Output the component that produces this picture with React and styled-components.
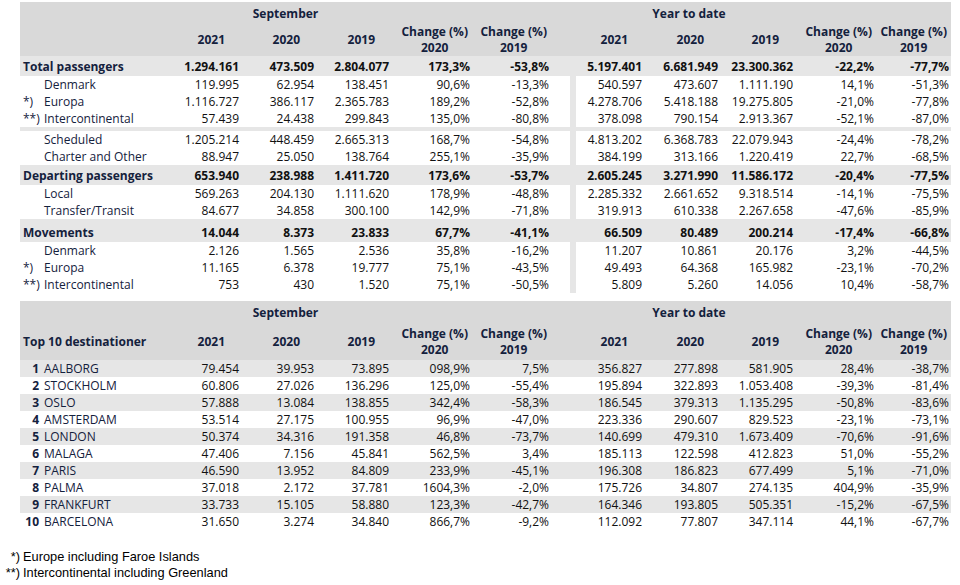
import React from "react";
import styled, { createGlobalStyle } from "styled-components";

const GlobalStyle = createGlobalStyle`
  body {
    margin: 0;
    background: #fff;
    font-family: "Open Sans", "Liberation Sans", sans-serif;
  }
`;

const COLS = "146px 75px 75px 75px 81px 98px 6px 68px 76px 75px 81px 75px";
const PADS = [2, 2, 2, 2, 21, 2, 2, 2, 2, 2];
const HEAD = "#d9d9d9";
const SHADE = "#e6e6e6";

const Page = styled.div`
  width: 960px;
  height: 585px;
  padding-top: 2px;
  box-sizing: border-box;
  overflow: hidden;
`;

const Table = styled.section`
  margin-left: 20px;
  width: 931px;
  margin-bottom: ${(p) => p.$gap || 0}px;
  font-size: 12px;
  color: #111;
`;

const Header = styled.div`
  background: ${HEAD};
  color: #14213d;
  font-weight: 700;
`;

const TitleRow = styled.div`
  display: grid;
  grid-template-columns: ${COLS};
  height: ${(p) => p.$h}px;
  align-items: center;
`;

const Title = styled.div`
  grid-column: ${(p) => p.$col};
  display: flex;
  justify-content: center;
  padding-left: 14px;
  white-space: nowrap;
`;

const HeadRow = styled.div`
  display: grid;
  grid-template-columns: ${COLS};
  height: ${(p) => p.$h}px;
  align-items: center;
`;

const HeadLabel = styled.div`
  padding-left: 3px;
  white-space: nowrap;
`;

const HeadCell = styled.div`
  display: flex;
  justify-content: flex-end;
  padding-right: ${(p) => p.$pad}px;
  white-space: nowrap;
`;

const HeadText = styled.div`
  text-align: center;
  line-height: 16px;
`;

const Row = styled.div`
  display: grid;
  grid-template-columns: ${COLS};
  height: ${(p) => p.$h || 17}px;
  align-items: center;
  background: ${(p) => (p.$shade ? SHADE : "#fff")};
  font-weight: ${(p) => (p.$bold ? 700 : 400)};
`;

const Spacer = styled.div`
  height: 4px;
  background: ${SHADE};
`;

const Label = styled.div`
  display: flex;
  align-items: center;
  padding-left: 3px;
  color: #14213d;
  white-space: nowrap;
`;

const Marker = styled.span`
  flex: none;
  width: ${(p) => (p.$rank ? 16 : 18)}px;
  margin-right: ${(p) => (p.$rank ? 5 : 3)}px;
  text-align: ${(p) => (p.$rank ? "right" : "left")};
  font-weight: ${(p) => (p.$rank ? 700 : 400)};
`;

const Num = styled.div`
  text-align: right;
  padding-right: ${(p) => p.$pad}px;
  white-space: nowrap;
`;

const Sep = styled.div`
  align-self: stretch;
  background: ${(p) => (p.$fill ? SHADE : "transparent")};
`;

const Notes = styled.div`
  margin-top: 19px;
  font-family: "Liberation Sans", Arial, sans-serif;
  font-size: 12.8px;
  color: #000;
`;

const Note = styled.div`
  display: grid;
  grid-template-columns: 20px auto;
  column-gap: 3px;
  line-height: 16px;
`;

const NoteMark = styled.span`
  text-align: right;
`;

const passengers = [
  { label: "Total passengers", bold: true, h: 20, v: ["1.294.161", "473.509", "2.804.077", "173,3%", "-53,8%", "5.197.401", "6.681.949", "23.300.362", "-22,2%", "-77,7%"] },
  { label: "Denmark", mark: "", v: ["119.995", "62.954", "138.451", "90,6%", "-13,3%", "540.597", "473.607", "1.111.190", "14,1%", "-51,3%"] },
  { label: "Europa", mark: "*)", v: ["1.116.727", "386.117", "2.365.783", "189,2%", "-52,8%", "4.278.706", "5.418.188", "19.275.805", "-21,0%", "-77,8%"] },
  { label: "Intercontinental", mark: "**)", v: ["57.439", "24.438", "299.843", "135,0%", "-80,8%", "378.098", "790.154", "2.913.367", "-52,1%", "-87,0%"] },
  { spacer: true },
  { label: "Scheduled", mark: "", v: ["1.205.214", "448.459", "2.665.313", "168,7%", "-54,8%", "4.813.202", "6.368.783", "22.079.943", "-24,4%", "-78,2%"] },
  { label: "Charter and Other", mark: "", v: ["88.947", "25.050", "138.764", "255,1%", "-35,9%", "384.199", "313.166", "1.220.419", "22,7%", "-68,5%"] },
  { label: "Departing passengers", bold: true, h: 20, v: ["653.940", "238.988", "1.411.720", "173,6%", "-53,7%", "2.605.245", "3.271.990", "11.586.172", "-20,4%", "-77,5%"] },
  { label: "Local", mark: "", v: ["569.263", "204.130", "1.111.620", "178,9%", "-48,8%", "2.285.332", "2.661.652", "9.318.514", "-14,1%", "-75,5%"] },
  { label: "Transfer/Transit", mark: "", v: ["84.677", "34.858", "300.100", "142,9%", "-71,8%", "319.913", "610.338", "2.267.658", "-47,6%", "-85,9%"] },
  { spacer: true },
  { label: "Movements", bold: true, h: 19, v: ["14.044", "8.373", "23.833", "67,7%", "-41,1%", "66.509", "80.489", "200.214", "-17,4%", "-66,8%"] },
  { label: "Denmark", mark: "", v: ["2.126", "1.565", "2.536", "35,8%", "-16,2%", "11.207", "10.861", "20.176", "3,2%", "-44,5%"] },
  { label: "Europa", mark: "*)", v: ["11.165", "6.378", "19.777", "75,1%", "-43,5%", "49.493", "64.368", "165.982", "-23,1%", "-70,2%"] },
  { label: "Intercontinental", mark: "**)", v: ["753", "430", "1.520", "75,1%", "-50,5%", "5.809", "5.260", "14.056", "10,4%", "-58,7%"] },
];

const destinations = [
  ["AALBORG", "79.454", "39.953", "73.895", "098,9%", "7,5%", "356.827", "277.898", "581.905", "28,4%", "-38,7%"],
  ["STOCKHOLM", "60.806", "27.026", "136.296", "125,0%", "-55,4%", "195.894", "322.893", "1.053.408", "-39,3%", "-81,4%"],
  ["OSLO", "57.888", "13.084", "138.855", "342,4%", "-58,3%", "186.545", "379.313", "1.135.295", "-50,8%", "-83,6%"],
  ["AMSTERDAM", "53.514", "27.175", "100.955", "96,9%", "-47,0%", "223.336", "290.607", "829.523", "-23,1%", "-73,1%"],
  ["LONDON", "50.374", "34.316", "191.358", "46,8%", "-73,7%", "140.699", "479.310", "1.673.409", "-70,6%", "-91,6%"],
  ["MALAGA", "47.406", "7.156", "45.841", "562,5%", "3,4%", "185.113", "122.598", "412.823", "51,0%", "-55,2%"],
  ["PARIS", "46.590", "13.952", "84.809", "233,9%", "-45,1%", "196.308", "186.823", "677.499", "5,1%", "-71,0%"],
  ["PALMA", "37.018", "2.172", "37.781", "1604,3%", "-2,0%", "175.726", "34.807", "274.135", "404,9%", "-35,9%"],
  ["FRANKFURT", "33.733", "15.105", "58.880", "123,3%", "-42,7%", "164.346", "193.805", "505.351", "-15,2%", "-67,5%"],
  ["BARCELONA", "31.650", "3.274", "34.840", "866,7%", "-9,2%", "112.092", "77.807", "347.114", "44,1%", "-67,7%"],
];

const headCols = [
  ["2021"], ["2020"], ["2019"], ["Change (%)", "2020"], ["Change (%)", "2019"],
  ["2021"], ["2020"], ["2019"], ["Change (%)", "2020"], ["Change (%)", "2019"],
];

function Values({ v, sepFill }) {
  const cells = [];
  v.forEach((val, i) => {
    if (i === 5) cells.push(<Sep key="sep" $fill={sepFill} />);
    cells.push(<Num key={i} $pad={PADS[i]}>{val}</Num>);
  });
  return cells;
}

function TableHeader({ label, titleH, headH }) {
  return (
    <Header>
      <TitleRow $h={titleH}>
        <Title $col="3">September</Title>
        <Title $col="9">Year to date</Title>
      </TitleRow>
      <HeadRow $h={headH}>
        <HeadLabel>{label}</HeadLabel>
        {headCols.map((lines, i) => {
          const cell = (
            <HeadCell key={i} $pad={PADS[i] + (lines.length > 1 ? 2 : 14)}>
              <HeadText>
                {lines.map((l) => (
                  <div key={l}>{l}</div>
                ))}
              </HeadText>
            </HeadCell>
          );
          return i === 5 ? [<div key="sep" />, cell] : cell;
        })}
      </HeadRow>
    </Header>
  );
}

export default function App() {
  return (
    <Page>
      <GlobalStyle />
      <Table $gap={8}>
        <TableHeader label="" titleH={22} headH={32} />
        {passengers.map((r, i) =>
          r.spacer ? (
            <Spacer key={i} />
          ) : (
            <Row key={i} $h={r.h} $bold={r.bold} $shade={r.bold}>
              <Label>
                {r.mark !== undefined && <Marker>{r.mark}</Marker>}
                {r.label}
              </Label>
              <Values v={r.v} sepFill />
            </Row>
          )
        )}
      </Table>

      <Table>
        <TableHeader label="Top 10 destinationer" titleH={22} headH={37} />
        {destinations.map(([city, ...v], i) => (
          <Row key={city} $shade={i % 2 === 0}>
            <Label>
              <Marker $rank>{i + 1}</Marker>
              {city}
            </Label>
            <Values v={v} />
          </Row>
        ))}
      </Table>

      <Notes>
        <Note>
          <NoteMark>*)</NoteMark>
          <span>Europe including Faroe Islands</span>
        </Note>
        <Note>
          <NoteMark>**)</NoteMark>
          <span>Intercontinental including Greenland</span>
        </Note>
      </Notes>
    </Page>
  );
}
